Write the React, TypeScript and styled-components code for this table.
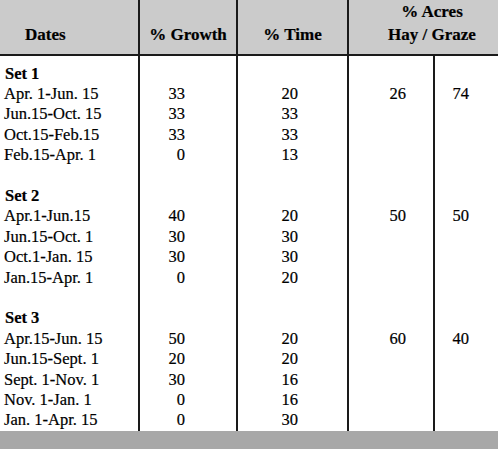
import React from 'react';
import styled, {createGlobalStyle} from 'styled-components';

type PeriodType = {
    dates: string
    growth: number
    time: number
}

type SetType = {
    title: string
    hay: number
    graze: number
    periods: PeriodType[]
}

const sets: SetType[] = [
    {
        title: 'Set 1', hay: 26, graze: 74,
        periods: [
            {dates: 'Apr. 1-Jun. 15', growth: 33, time: 20},
            {dates: 'Jun.15-Oct. 15', growth: 33, time: 33},
            {dates: 'Oct.15-Feb.15', growth: 33, time: 33},
            {dates: 'Feb.15-Apr. 1', growth: 0, time: 13},
        ]
    },
    {
        title: 'Set 2', hay: 50, graze: 50,
        periods: [
            {dates: 'Apr.1-Jun.15', growth: 40, time: 20},
            {dates: 'Jun.15-Oct. 1', growth: 30, time: 30},
            {dates: 'Oct.1-Jan. 15', growth: 30, time: 30},
            {dates: 'Jan.15-Apr. 1', growth: 0, time: 20},
        ]
    },
    {
        title: 'Set 3', hay: 60, graze: 40,
        periods: [
            {dates: 'Apr.15-Jun. 15', growth: 50, time: 20},
            {dates: 'Jun.15-Sept. 1', growth: 20, time: 20},
            {dates: 'Sept. 1-Nov. 1', growth: 30, time: 16},
            {dates: 'Nov. 1-Jan. 1', growth: 0, time: 16},
            {dates: 'Jan. 1-Apr. 15', growth: 0, time: 30},
        ]
    },
]

const GlobalStyle = createGlobalStyle`
  html, body {
    margin: 0;
    padding: 0;
    background: #fff;
    overflow: hidden;
  }
  body {
    font-family: "Liberation Serif", "Times New Roman", serif;
    color: #000;
    -webkit-text-stroke: 0.2px #000;
  }
`;

const App = () => {
    const rows: React.ReactNode[] = []

    sets.forEach((set, setIndex) => {
        if (setIndex > 0) {
            rows.push(
                <Row key={`gap-${setIndex}`}>
                    <DateCell/><NumCell $pad={51}/><NumCell $pad={49}/><NumCell $pad={27}/><NumCell $pad={29} $last/>
                </Row>
            )
        }
        rows.push(
            <Row key={set.title} $lead={setIndex === 0}>
                <DateCell $bold>{set.title}</DateCell>
                <NumCell $pad={51}/><NumCell $pad={49}/><NumCell $pad={27}/><NumCell $pad={29} $last/>
            </Row>
        )
        set.periods.forEach((p, i) => {
            rows.push(
                <Row key={set.title + p.dates}>
                    <DateCell>{p.dates}</DateCell>
                    <NumCell $pad={51}>{p.growth}</NumCell>
                    <NumCell $pad={49}>{p.time}</NumCell>
                    <NumCell $pad={27}>{i === 0 ? set.hay : ''}</NumCell>
                    <NumCell $pad={29} $last>{i === 0 ? set.graze : ''}</NumCell>
                </Row>
            )
        })
    })

    return (
        <>
            <GlobalStyle/>
            <Sheet>
                <HeadRow>
                    <HeadCell $align="left" $padLeft={25}>Dates</HeadCell>
                    <HeadCell>% Growth</HeadCell>
                    <HeadCell>% Time</HeadCell>
                    <HeadCell $padLeft={17} $last>
                        <span>% Acres</span>
                        <span>Hay / Graze</span>
                    </HeadCell>
                </HeadRow>
                <Body>{rows}</Body>
                <Footer/>
            </Sheet>
        </>
    )
};

export default App;

const Sheet = styled.div`
  width: 498px;
  display: flex;
  flex-direction: column;
`;

const HeadRow = styled.div`
  display: grid;
  grid-template-columns: 140px 98px 111px 149px;
  height: 55.5px;
  box-sizing: border-box;
  background: #cbcbcb;
  border-bottom: 2.5px solid #1a1a1a;
`;

const HeadCell = styled.div<{ $align?: 'left' | 'center', $padLeft?: number, $last?: boolean }>`
  display: flex;
  flex-direction: column;
  justify-content: flex-end;
  align-items: ${p => p.$align === 'left' ? 'flex-start' : 'center'};
  padding: 0 0 10px ${p => p.$padLeft || 0}px;
  box-sizing: border-box;
  border-right: ${p => p.$last ? 'none' : '2px solid #1a1a1a'};
  font-weight: bold;
  font-size: 17px;
  line-height: 23px;
  white-space: nowrap;
`;

const Body = styled.div`
  display: flex;
  flex-direction: column;
`;

const Row = styled.div<{ $lead?: boolean }>`
  display: grid;
  grid-template-columns: 140px 98px 111px 86px 63px;
  font-size: 16.5px;
  line-height: 20.4px;

  & > div {
    padding-top: ${p => p.$lead ? 8 : 0}px;
  }
`;

const DateCell = styled.div<{ $bold?: boolean }>`
  box-sizing: border-box;
  min-height: 20.4px;
  padding-left: ${p => p.$bold ? 5 : 4}px;
  border-right: 2px solid #1a1a1a;
  font-weight: ${p => p.$bold ? 'bold' : 'normal'};
  white-space: nowrap;
`;

const NumCell = styled.div<{ $pad: number, $last?: boolean }>`
  box-sizing: border-box;
  min-height: 20.4px;
  text-align: right;
  padding-right: ${p => p.$pad}px;
  border-right: ${p => p.$last ? 'none' : '2px solid #1a1a1a'};
`;

const Footer = styled.div`
  height: 22px;
  margin-top: 0.5px;
  background: #a8a8a8;
`;
